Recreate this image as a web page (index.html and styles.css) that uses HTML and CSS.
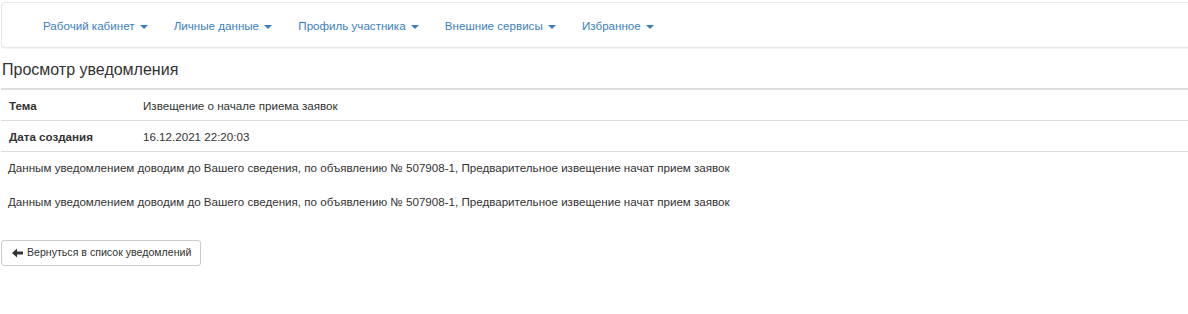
FILE: index.html
```html
<!DOCTYPE html>
<html lang="ru">
<head>
  <meta charset="UTF-8">
  <title>Просмотр уведомления</title>
  <link rel="stylesheet" href="styles.css">
</head>
<body>
  <nav class="navbar">
    <ul class="nav">
      <li><a href="#">Рабочий кабинет <span class="caret"></span></a></li>
      <li><a href="#">Личные данные <span class="caret"></span></a></li>
      <li><a href="#">Профиль участника <span class="caret"></span></a></li>
      <li><a href="#">Внешние сервисы <span class="caret"></span></a></li>
      <li><a href="#">Избранное <span class="caret"></span></a></li>
    </ul>
  </nav>

  <h3 class="page-title">Просмотр уведомления</h3>

  <table class="details">
    <tbody>
      <tr>
        <th>Тема</th>
        <td>Извещение о начале приема заявок</td>
      </tr>
      <tr>
        <th>Дата создания</th>
        <td>16.12.2021 22:20:03</td>
      </tr>
      <tr>
        <td class="message" colspan="2">
          Данным уведомлением доводим до Вашего сведения, по объявлению № 507908-1, Предварительное извещение начат прием заявок
          <br><br>
          Данным уведомлением доводим до Вашего сведения, по объявлению № 507908-1, Предварительное извещение начат прием заявок
        </td>
      </tr>
    </tbody>
  </table>

  <a class="btn" href="#">
    <svg class="arrow" width="11" height="10" viewBox="0 0 11 10"><path d="M0 5 L5 0.5 L5 3.5 L11 3.5 L11 6.5 L5 6.5 L5 9.5 Z" fill="#333"/></svg>
    Вернуться в список уведомлений
  </a>
</body>
</html>
```

FILE: styles.css
```css
html, body {
  margin: 0;
  overflow-x: hidden;
}
body {
  font-family: "Liberation Sans", Arial, sans-serif;
  font-size: 11.6px;
  line-height: 1.42857;
  color: #333;
  background: #fff;
}

.navbar {
  margin: 2px -6px 0 1px;
  height: 44px;
  border: 1px solid #e7e7e7;
  border-radius: 4px;
  box-shadow: 0 1px 1px rgba(0, 0, 0, 0.05);
  background: #fff;
}
.nav {
  list-style: none;
  margin: 0;
  padding: 0 0 0 28px;
  display: flex;
}
.nav a {
  display: block;
  padding: 14px 13px 13px;
  line-height: 17px;
  color: #3a7fc1;
  text-decoration: none;
}
.caret {
  display: inline-block;
  width: 0;
  height: 0;
  margin-left: 2px;
  vertical-align: middle;
  border-top: 4px solid;
  border-left: 4px solid transparent;
  border-right: 4px solid transparent;
}

.page-title {
  margin: 12px 0 8px 2px;
  font-size: 16px;
  font-weight: normal;
  line-height: 20px;
  color: #333;
}

.details {
  width: 100%;
  border-collapse: collapse;
  border-top: 2px solid #ddd;
  margin-left: 1px;
}
.details th,
.details td {
  padding: 7px 8px 6px;
  text-align: left;
  vertical-align: top;
  border-top: 1px solid #ddd;
  line-height: 17px;
}
.details th {
  width: 118px;
  font-weight: bold;
}
.details .message {
  padding-left: 7px;
}

.btn {
  display: inline-flex;
  align-items: center;
  gap: 4px;
  margin: 24px 0 0 1px;
  padding: 3px 9px 3px 10px;
  height: 18px;
  border: 1px solid #ccc;
  border-radius: 3px;
  color: #333;
  font-size: 10.6px;
  text-decoration: none;
}
```
